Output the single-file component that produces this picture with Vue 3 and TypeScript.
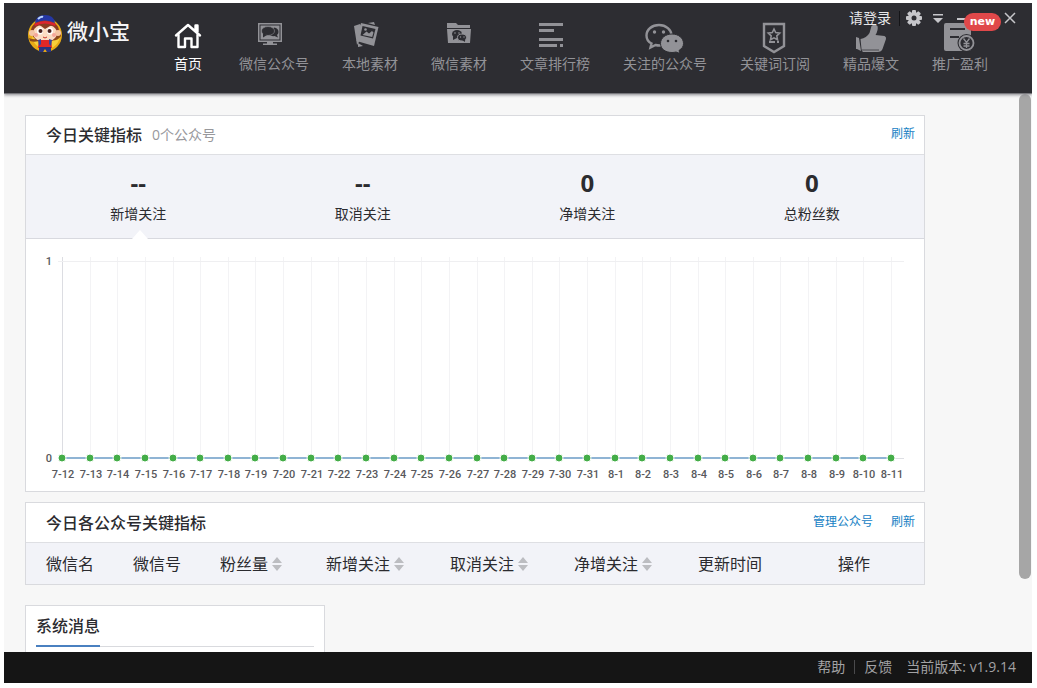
<script setup lang="ts">
interface NavItem { id: string; label: string; active?: boolean; badge?: string }
interface Column { label: string; sortable?: boolean; width: string }

const nav: NavItem[] = [
  { id: 'home', label: '首页', active: true },
  { id: 'monitor', label: '微信公众号' },
  { id: 'photo', label: '本地素材' },
  { id: 'folder', label: '微信素材' },
  { id: 'rank', label: '文章排行榜' },
  { id: 'wechat', label: '关注的公众号' },
  { id: 'shield', label: '关键词订阅' },
  { id: 'thumb', label: '精品爆文' },
  { id: 'profit', label: '推广盈利', badge: 'new' },
]

const stats = [
  { value: '--', label: '新增关注' },
  { value: '--', label: '取消关注' },
  { value: '0', label: '净增关注' },
  { value: '0', label: '总粉丝数' },
]

const columns: Column[] = [
  { label: '微信名', width: 'c-s' },
  { label: '微信号', width: 'c-s' },
  { label: '粉丝量', sortable: true, width: 'c-m' },
  { label: '新增关注', sortable: true, width: 'c-l' },
  { label: '取消关注', sortable: true, width: 'c-l' },
  { label: '净增关注', sortable: true, width: 'c-l' },
  { label: '更新时间', width: 'c-xl' },
  { label: '操作', width: 'c-rest' },
]

const days: string[] = []
for (let d = 12; d <= 31; d++) days.push(`7-${d}`)
for (let d = 1; d <= 11; d++) days.push(`8-${d}`)
const left = 36
const points = days.map((label, i) => ({ label, x: Math.round(left + (i * 829) / 30) }))
</script>

<template>
  <div class="page">
    <div class="window">
      <header class="header">
        <div class="logo">
          <svg width="36" height="40" viewBox="0 0 36 40" aria-hidden="true">
            <circle cx="18" cy="22" r="17" fill="#e8ab16" />
            <circle cx="19" cy="22" r="14" fill="#f7cf3a" />
            <path d="M2 25q7 3 12-1l1 3q-7 3-12 1zM34 20q-5 5-11 4l-1 3q8 2 12-4z" fill="#8c4a1c" />
            <ellipse cx="18" cy="18" rx="14" ry="11" fill="#8b3c22" />
            <ellipse cx="18" cy="20" rx="12" ry="9" fill="#fbdcc4" />
            <circle cx="5" cy="20" r="3" fill="#f4c4a4" /><circle cx="31" cy="20" r="3" fill="#f4c4a4" />
            <path d="M8 11q9-5 21 1l-6 1-5 3-4-3z" fill="#8b3c22" />
            <path d="M8 10Q9 2 18 2q9 0 10 8-10-5-20 0z" fill="#2537a4" />
            <path d="M7 11q11-6 22 0l-1 2q-10-5-20 0z" fill="#dd2430" />
            <path d="M11 6q3-3 5-2" stroke="#b9d4ff" stroke-width="2" fill="none" />
            <ellipse cx="13" cy="18" rx="3" ry="3.500" fill="#fff" /><ellipse cx="23" cy="18" rx="3" ry="3.500" fill="#fff" />
            <circle cx="13.500" cy="18" r="2" fill="#4a211f" /><circle cx="22.500" cy="18" r="2" fill="#4a211f" />
            <circle cx="9" cy="22" r="2" fill="#f5a69a" /><circle cx="27" cy="22" r="2" fill="#f5a69a" />
            <path d="M16 24q2 2 4 0" stroke="#c8352b" fill="none" />
            <path d="M12 27h12l1 8H11z" fill="#e02727" />
            <path d="M11 27l3-1v5l-2 2zM25 27l-3-1v5l2 2z" fill="#3445a0" />
            <path d="M12 34h12v5h-4l-2-3-2 3h-4z" fill="#29347f" />
          </svg>
          <span>微小宝</span>
        </div>
        <nav class="nav">
          <a v-for="n in nav" :key="n.id" href="#" class="nav-item" :class="{ active: n.active }">
            <svg class="nav-icon" viewBox="0 0 40 40" width="40" height="40" aria-hidden="true">
              <g v-if="n.id === 'home'" fill="none" stroke="currentColor" stroke-width="2.400" stroke-linecap="round" stroke-linejoin="round">
                <path d="M8 21.500L20 11l12 10.500M27.500 16v-4.500h2v6.500" />
                <path d="M10.500 21v12h6.500v-8.500h6.500V33h6V21" />
              </g>
              <g v-else-if="n.id === 'monitor'" fill="currentColor">
                <path fill-rule="evenodd" d="M4 9h24v19H4zM5.500 10.500v16h21v-16z" />
                <path d="M6.500 11.500h19v14h-19z" />
                <path d="M20 13.500q4.500 .5 4.500 4.500 0 2-1.500 3l1 2.500-3.500-1.500q-3 .5-5-1z" fill="#2d2d32" />
                <ellipse cx="14" cy="17" rx="6.500" ry="4.500" fill="#2d2d32" stroke="currentColor" stroke-width=".6" />
                <path d="M9 19v4.500l4-2.500z" fill="#2d2d32" />
                <path d="M13 28h6v1.500h4v1.500H9v-1.500h4z" />
              </g>
              <g v-else-if="n.id === 'photo'">
                <path d="M4 12l6-2 2 3-3 15-2 3zM18 9l6-1 1 3zM8 29l5 3-5 1z" fill="currentColor" />
                <path d="M11 9l17.500 4-4.500 19-17.500-5z" fill="currentColor" />
                <path d="M12.500 12l13 3-2.500 9.500-12.500-3z" fill="#2d2d32" />
                <path d="M12.500 21l4-3.500 2.500 2 3-2.500 1.500 1.500-1.300 4.500z" fill="currentColor" /><circle cx="15.500" cy="15.500" r="1.300" fill="currentColor" />
              </g>
              <g v-else-if="n.id === 'folder'">
                <path d="M8 9h9l2 2h12v3H8zM8 15h24l-1 14H9z" fill="currentColor" />
                <ellipse cx="18" cy="20" rx="5" ry="4" fill="#2d2d32" /><path d="M14 22v4l4-2z" fill="#2d2d32" />
                <ellipse cx="23" cy="23.500" rx="4.500" ry="3.500" fill="#2d2d32" stroke="currentColor" /><path d="M23 26l3 2v-3z" fill="#2d2d32" />
                <circle cx="16" cy="19" r=".8" fill="currentColor" /><circle cx="20" cy="19" r=".8" fill="currentColor" />
                <circle cx="21.500" cy="23" r=".7" fill="currentColor" /><circle cx="25" cy="23" r=".7" fill="currentColor" />
              </g>
              <g v-else-if="n.id === 'rank'" fill="currentColor">
                <path d="M4 9h24v3H4zM4 15h15v3H4zM4 24h24v3H4zM4 30h18v3H4zM25 30h3v3h-3z" />
              </g>
              <g v-else-if="n.id === 'wechat'">
                <path d="M14 11C7 11 1.500 15.500 1.500 21.500c0 3.500 2 6.500 5 8L5.500 33.500l5-2.500q2 .5 4 .5C21 31.500 26.500 27 26.500 21.500S21 11 14 11z" fill="none" stroke="currentColor" stroke-width="2.400" />
                <circle cx="9.500" cy="18" r="1.700" fill="currentColor" /><circle cx="18.500" cy="18" r="1.700" fill="currentColor" />
                <path d="M27 20c-6.500 0-11.500 4-11.500 9.500S20.500 38.500 27 38.500q2 0 4-.5l4 1.500-1-3c3-2 4.500-4 4.500-7C38.500 24 33.500 20 27 20z" fill="currentColor" stroke="#2d2d32" />
                <circle cx="23" cy="27" r="1.300" fill="#2d2d32" /><circle cx="31" cy="27" r="1.300" fill="#2d2d32" />
              </g>
              <g v-else-if="n.id === 'shield'" fill="none" stroke="currentColor">
                <path d="M9 10h20v22l-10 6-10-6z" stroke-width="2.400" />
                <path d="M19 15l1.700 3.600 4 .5-2.900 2.700.7 4-3.500-2-3.500 2 .7-4-2.900-2.700 4-.5z" stroke-width="1.600" />
                <path d="M14 28h6M22 28h2" stroke-width="2" />
              </g>
              <g v-else-if="n.id === 'thumb'" fill="currentColor">
                <path d="M5 23l3 1 2 13-4-2H5z" />
                <path d="M9.500 25q6-1 9-6l2-7q3-3 6 0 1 4-2 9l9 1q2 1 1.500 3l-3.500 10q-1 3-5 3H12q-1 0-1.500-3z" />
                <path d="M11 36h17" stroke="#2d2d32" stroke-width=".7" />
              </g>
              <g v-else>
                <path d="M6 9h23q2 0 2 2v26H6q-2 0-2-2V11q0-2 2-2z" fill="currentColor" />
                <path d="M10 15h15M10 23h9" stroke="#2d2d32" stroke-width="2" />
                <circle cx="26.500" cy="29" r="9" fill="#2d2d32" />
                <circle cx="26.500" cy="29" r="7" fill="none" stroke="currentColor" stroke-width="1.800" />
                <path d="M23.500 24.500l3 4 3-4M23.500 29.500h6M23.500 32h6M26.500 29v5" fill="none" stroke="currentColor" stroke-width="1.300" />
              </g>
            </svg>
            <span>{{ n.label }}</span>
            <b v-if="n.badge" class="badge">{{ n.badge }}</b>
          </a>
        </nav>
        <div class="controls">
          <a href="#" class="login">请登录</a>
          <i class="divider"></i>
          <button type="button" aria-label="设置">
            <svg width="16" height="16" viewBox="0 0 16 16">
              <g fill="currentColor">
                <rect v-for="a in [0, 45, 90, 135]" :key="a" x="6" y="0" width="4" height="16" rx="1" :transform="`rotate(${a} 8 8)`" />
                <circle cx="8" cy="8" r="6" />
              </g>
              <circle cx="8" cy="8" r="2.500" fill="#2d2d32" />
            </svg>
          </button>
          <button type="button" aria-label="菜单">
            <svg width="12" height="16" viewBox="0 0 12 16"><path d="M1 4h10v1.500H1zM1 8h10l-5 5z" fill="currentColor" /></svg>
          </button>
          <button type="button" aria-label="最小化">
            <svg width="12" height="16" viewBox="0 0 12 16"><path d="M1 8h10v2H1z" fill="currentColor" /></svg>
          </button>
          <button type="button" aria-label="最大化">
            <svg width="12" height="16" viewBox="0 0 12 16"><path d="M1 4h10v9H1z" fill="none" stroke="#929297" stroke-width="2" /></svg>
          </button>
          <button type="button" aria-label="关闭">
            <svg width="12" height="16" viewBox="0 0 12 16"><path d="M1 3l10 10M11 3L1 13" stroke="currentColor" stroke-width="1.500" /></svg>
          </button>
        </div>
      </header>

      <div class="body">
        <main class="content">
          <section class="card">
            <div class="card-head summary-head">
              <h2>今日关键指标</h2>
              <span class="sub">0个公众号</span>
              <div class="links"><a href="#">刷新</a></div>
            </div>
            <div class="stats">
              <button v-for="(s, i) in stats" :key="s.label" type="button" class="stat" :class="{ selected: i === 0 }">
                <strong>{{ s.value }}</strong>
                <span>{{ s.label }}</span>
              </button>
            </div>
            <svg class="chart" viewBox="0 0 898 252" role="img" aria-label="新增关注">
              <g shape-rendering="crispEdges">
                <path v-for="p in points" :key="p.label" :d="`M${p.x + 0.5} 18V219`" :stroke="p.x === left ? '#dcdde2' : '#f3f3f5'" />
                <path d="M32 22.500H878" stroke="#efeff1" />
                <path d="M32 219.500H878" stroke="#dedfe4" />
              </g>
              <path d="M36 219H865" stroke="#8fb4d4" stroke-width="2" />
              <circle v-for="p in points" :key="p.label" :cx="p.x" cy="219" r="4" fill="#44ad48" stroke="#fff" stroke-width="1" />
              <text x="26" y="26" text-anchor="end">1</text>
              <text x="26" y="223" text-anchor="end">0</text>
              <text v-for="p in points" :key="p.label" :x="p.x + 1" y="239" text-anchor="middle">{{ p.label }}</text>
            </svg>
          </section>

          <section class="card">
            <div class="card-head">
              <h2>今日各公众号关键指标</h2>
              <div class="links"><a href="#">管理公众号</a><a href="#">刷新</a></div>
            </div>
            <table class="grid">
              <thead>
                <tr>
                  <th v-for="c in columns" :key="c.label" scope="col" :class="c.width">
                    <button v-if="c.sortable" type="button" class="sort">
                      {{ c.label }}
                      <svg width="10" height="14" viewBox="0 0 10 14" aria-hidden="true"><path d="M5 0l5 6H0zM5 14L0 8h10z" fill="#bcbdc1" /></svg>
                    </button>
                    <template v-else>{{ c.label }}</template>
                  </th>
                </tr>
              </thead>
            </table>
          </section>

          <section class="card news">
            <div class="news-head"><h2>系统消息</h2></div>
          </section>
        </main>
        <div class="scrollbar"><div class="thumb"></div></div>
      </div>

      <footer class="footer">
        <a href="#">帮助</a>
        <i class="divider"></i>
        <a href="#">反馈</a>
        <span class="version">当前版本: v1.9.14</span>
      </footer>
    </div>
  </div>
</template>

<style>
body { margin: 0; background: #fff; }
</style>

<style scoped>
* { box-sizing: border-box; }
.page {
  height: 100vh;
  padding: 3px 5px 5px 4px;
  font-family: "Open Sans", "Noto Sans CJK SC", sans-serif;
  font-size: 14px;
  line-height: 20px;
  color: #2b2b2f;
}
.window { height: 100%; display: flex; flex-direction: column; background: #f7f7f7; overflow: hidden; }
a { color: inherit; text-decoration: none; }
button { border: 0; padding: 0; margin: 0; background: none; font: inherit; color: inherit; display: block; }
svg { display: block; }
h2 { margin: 0; font-size: 16px; line-height: 24px; font-weight: 500; }

.header {
  position: relative;
  z-index: 1;
  flex: none;
  display: flex;
  height: 91px;
  padding-left: 23px;
  background: #2d2d32;
  border-bottom: 1px solid #77777c;
  box-shadow: 0 1px 3px #88888e;
}
.logo { display: flex; align-items: flex-start; gap: 4px; width: 143px; flex: none; padding-top: 10px; color: #f5f5f7; }
.logo span { font-size: 21px; line-height: 28px; font-weight: 500; padding-top: 4px; }
.nav { display: flex; gap: 33px; flex: none; }
.nav-item {
  position: relative;
  min-width: 36px;
  display: flex;
  flex-direction: column;
  align-items: center;
  padding-top: 11px;
  color: #929297;
  white-space: nowrap;
}
.nav-item.active { color: #fff; }
.nav-icon { flex: none; margin: 0 -2px; }
.nav-item > span { line-height: 20px; }
.badge {
  position: absolute;
  z-index: 2;
  top: 10px;
  right: -13px;
  width: 37px;
  height: 18px;
  border-radius: 9px;
  background: #e0484a;
  color: #fff;
  font: bold 11px/17px "DejaVu Sans", sans-serif;
  text-align: center;
}
.controls {
  position: absolute;
  z-index: 1;
  top: 5px;
  right: 16px;
  display: flex;
  align-items: center;
  color: #c6c6ca;
  gap: 12px;
}
.login { color: #e8e8ea; margin-right: -4px; }
.controls .divider { width: 1px; height: 15px; background: #141417; margin-right: -6px; }
.controls button:nth-of-type(1) { margin-right: -2px; }

.body { flex: 1; min-height: 0; display: flex; overflow: hidden; }
.content { flex: 1; min-width: 0; padding: 21px 21px 0; overflow: hidden; }
.card { max-width: 900px; background: #fff; border: 1px solid #d9dade; margin-bottom: 10px; }
.card-head { display: flex; align-items: center; height: 40px; padding: 0 9px 0 20px; border-bottom: 1px solid #dedfe3; }
.summary-head { height: 39px; }
.sub { margin-left: 10px; color: #98989c; }
.links { margin-left: auto; padding-bottom: 2px; display: flex; gap: 18px; font-size: 12px; line-height: 18px; color: #1681c4; }
.stats { display: grid; grid-template-columns: repeat(4, 1fr); background: #f2f3f8; border-bottom: 1px solid #d8d9df; height: 84px; }
.stat { position: relative; display: flex; flex-direction: column; align-items: center; justify-content: flex-start; padding-top: 13px; }
.stat strong { font-size: 24px; line-height: 30px; }
.stat span { line-height: 20px; margin-top: 6px; }
.stat.selected::after {
  content: "";
  position: absolute;
  left: 50%;
  bottom: -1px;
  margin-left: -6px;
  border: 8px solid transparent;
  border-top: 0;
  border-bottom: 9px solid #fff;
}
.chart { width: 100%; height: auto; }
.chart text { font: 500 11px Roboto, sans-serif; fill: #58585c; }
.grid { width: 100%; table-layout: fixed; border-collapse: collapse; background: #f2f3f8; }
.grid th { height: 41px; padding: 0; font-size: 16px; font-weight: 400; text-align: left; white-space: nowrap; }
.grid th:first-child { padding-left: 20px; }
.grid .c-s { width: 87px; }
.grid .c-s:first-child { width: 107px; }
.grid .c-m { width: 106px; }
.grid .c-l { width: 124px; }
.grid .c-xl { width: 140px; }
.sort { display: flex; align-items: center; gap: 4px; }
.news { max-width: 300px; margin-top: 20px; padding: 0 10px; height: 120px; }
.news-head { border-bottom: 1px solid #d9dade; display: flex; }
.news-head h2 { padding: 8px 0; height: 41px; border-bottom: 2px solid #4a80c0; margin-bottom: -1px; }
.scrollbar { flex: none; width: 12px; margin-right: 1px; }
.thumb { height: 87%; border-radius: 6px; background: #a6a6a6; }

.footer {
  flex: none;
  display: flex;
  align-items: center;
  justify-content: flex-end;
  height: 31px;
  padding: 0 16px 2px 0;
  background: #151515;
  color: #a2a2a4;
}
.footer .divider { width: 1px; height: 14px; margin: 0 9px; background: #4a4a4c; }
.version { margin-left: 14px; }
</style>
